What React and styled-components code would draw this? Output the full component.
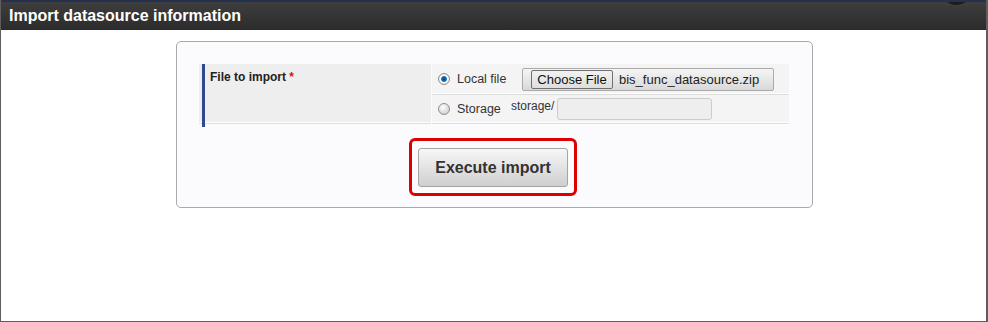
import styled, { createGlobalStyle } from 'styled-components';

const GlobalStyle = createGlobalStyle`
  html, body {
    margin: 0;
    padding: 0;
    background: #ffffff;
  }
  body {
    font-family: "Liberation Sans", Arial, sans-serif;
  }
`;

const App = () => {
  return (
    <>
      <GlobalStyle />
      <Frame>
        <Header>
          <Title>Import datasource information</Title>
          <Knob />
        </Header>
        <Body>
          <Panel>
            <FormGrid>
              <LabelCell>
                <LabelText>
                  File to import <Required>*</Required>
                </LabelText>
              </LabelCell>
              <ValueCell>
                <Option>
                  <Radio $checked />
                  <OptionText>Local file</OptionText>
                </Option>
                <FilePicker>
                  <ChooseButton>Choose File</ChooseButton>
                  <FileName>bis_func_datasource.zip</FileName>
                </FilePicker>
              </ValueCell>
              <ValueCell $last>
                <Option>
                  <Radio />
                  <OptionText>Storage</OptionText>
                </Option>
                <Prefix>storage/</Prefix>
                <PathInput />
              </ValueCell>
            </FormGrid>
            <Actions>
              <Highlight>
                <ExecuteButton>Execute import</ExecuteButton>
              </Highlight>
            </Actions>
          </Panel>
        </Body>
      </Frame>
    </>
  );
};

export default App;

const Frame = styled.div`
  width: 988px;
  height: 322px;
  box-sizing: border-box;
  border: 1px solid #5e5e5e;
  border-top: none;
  border-right-width: 2px;
  display: flex;
  flex-direction: column;
  overflow: hidden;
`;

const Header = styled.div`
  position: relative;
  overflow: hidden;
  height: 28px;
  border-top: 2px solid #26314d;
  background: linear-gradient(#3e3e3e, #2b2b2b);
  display: flex;
  align-items: center;
  padding-left: 8px;
  flex-shrink: 0;
`;

const Title = styled.h1`
  margin: 0;
  font-size: 16px;
  font-weight: bold;
  color: #ffffff;
`;

const Knob = styled.div`
  position: absolute;
  top: -19px;
  left: 942px;
  width: 27px;
  height: 22px;
  border-radius: 50%;
  background: #1c1c1c;
`;

const Body = styled.div`
  flex: 1;
  display: flex;
  justify-content: center;
  padding-top: 11px;
  padding-left: 1px;
`;

const Panel = styled.div`
  box-sizing: border-box;
  width: 637px;
  height: 167px;
  border: 1px solid #a9a9a9;
  border-radius: 5px;
  background: #fbfbfd;
  padding: 22px 22px 0 22px;
  display: flex;
  flex-direction: column;
  align-items: center;
`;

const FormGrid = styled.div`
  width: 590px;
  display: grid;
  grid-template-columns: 232px 1fr;
  grid-template-rows: 31px 29px;
  column-gap: 1px;
  font-size: 12px;
  color: #222;
`;

const LabelCell = styled.div`
  grid-row: 1 / span 2;
  background: #eeeeee;
  padding-left: 3px;
  border-bottom: 1px solid #dddddd;
  box-shadow: inset 0 -1px 0 #ffffff;
`;

const LabelText = styled.div`
  height: 57px;
  border-left: 3px solid #33488a;
  padding: 6px 0 0 5px;
  font-weight: bold;
`;

const Required = styled.span`
  color: #e01010;
`;

const ValueCell = styled.div`
  background: #f4f4f4;
  padding-left: 6px;
  border-bottom: 1px solid #dddddd;
  box-shadow: inset 0 -1px 0 #ffffff;
  display: flex;
  align-items: center;
  padding-bottom: ${({ $last }) => ($last ? '1px' : '0')};
`;

const Option = styled.label`
  display: flex;
  align-items: center;
  width: 84px;
  flex-shrink: 0;
`;

const Radio = styled.span`
  width: 10px;
  height: 10px;
  border-radius: 50%;
  border: 1px solid #8f8f8f;
  background: ${({ $checked }) =>
    $checked
      ? 'radial-gradient(circle, #0a3d6b 0, #1a78c2 2.5px, #ffffff 3.5px, #e8e8e8 5px)'
      : 'radial-gradient(circle at 40% 35%, #ffffff 0, #d6d6d6 6px)'};
  margin-right: 7px;
  flex-shrink: 0;
`;

const OptionText = styled.span`
  font-size: 12.5px;
  color: #333;
`;

const FilePicker = styled.div`
  box-sizing: border-box;
  width: 252px;
  height: 23px;
  border: 1px solid #aaaaaa;
  border-radius: 2px;
  background: linear-gradient(#f5f5f5, #d9d9d9);
  display: flex;
  align-items: center;
  padding-left: 8px;
  gap: 6px;
`;

const ChooseButton = styled.span`
  box-sizing: border-box;
  height: 19px;
  width: 82px;
  border: 1px solid #707070;
  border-radius: 2px;
  background: linear-gradient(#f2f2f2, #dedede);
  font-size: 13px;
  color: #111;
  display: flex;
  align-items: center;
  justify-content: center;
`;

const FileName = styled.span`
  font-size: 13px;
  color: #222;
`;

const Prefix = styled.span`
  font-size: 12px;
  color: #333;
  align-self: flex-start;
  margin: 4px 3px 0 -11px;
`;

const PathInput = styled.span`
  box-sizing: border-box;
  width: 155px;
  height: 22px;
  border: 1px solid #cccccc;
  border-radius: 3px;
  background: #eeeeee;
`;

const Actions = styled.div`
  padding-top: 14px;
  display: flex;
  justify-content: center;
  margin-left: -2px;
`;

const Highlight = styled.div`
  box-sizing: border-box;
  border: 3px solid #dd0000;
  border-radius: 6px;
  padding: 7px 6px 6px 6px;
`;

const ExecuteButton = styled.button`
  box-sizing: border-box;
  width: 150px;
  height: 39px;
  border: 1px solid #a5a5a5;
  border-radius: 3px;
  background: linear-gradient(#f7f7f7, #cfcfcf);
  font-family: "Liberation Sans", Arial, sans-serif;
  font-size: 16px;
  font-weight: bold;
  color: #333;
  cursor: pointer;
`;
